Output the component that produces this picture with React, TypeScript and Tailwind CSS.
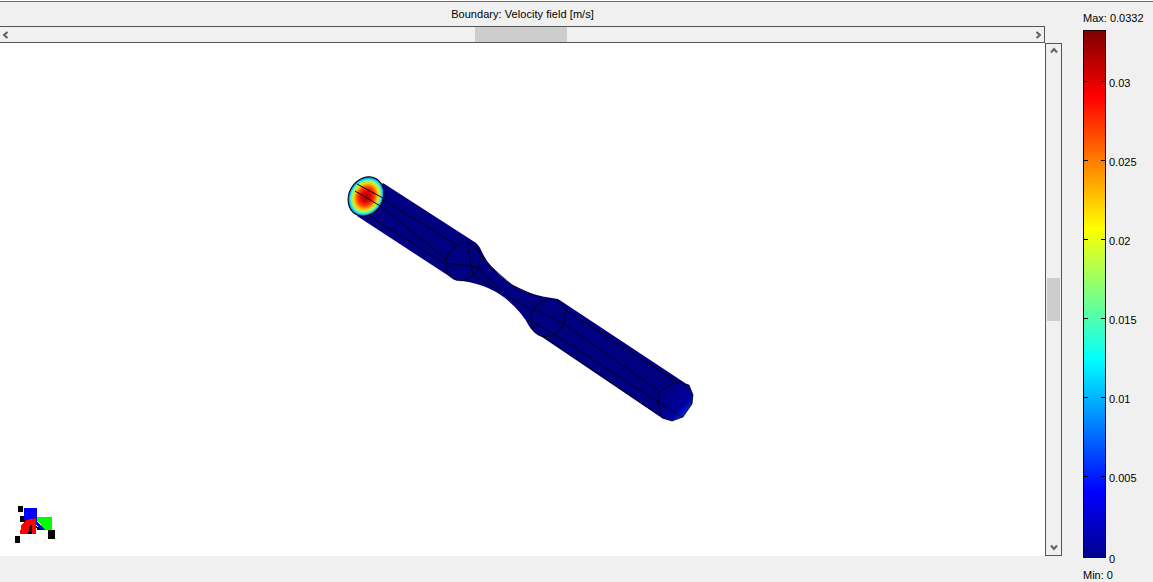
import React from 'react';

const TICKS = ['0.03', '0.025', '0.02', '0.015', '0.01', '0.005'];

const Chevron: React.FC<{ d: string }> = ({ d }) => (
  <svg width="8" height="8" viewBox="0 0 8 8" fill="none" stroke="#606060" strokeWidth="2">
    <path d={d} />
  </svg>
);

// Model drawn in page coordinates, viewBox starts at the canvas top
const Model: React.FC = () => (
  <svg className="block" width="1045" height="513" viewBox="0 43 1045 513">
    <defs>
      <radialGradient id="inlet" cx="0.5" cy="0.5" r="0.5">
        <stop offset="0" stopColor="#a00000" />
        <stop offset="0.25" stopColor="#e00000" />
        <stop offset="0.48" stopColor="#ff4000" />
        <stop offset="0.66" stopColor="#ffc800" />
        <stop offset="0.78" stopColor="#a0ff60" />
        <stop offset="0.88" stopColor="#30e0e0" />
        <stop offset="0.95" stopColor="#0090ff" />
        <stop offset="1" stopColor="#0040d0" />
      </radialGradient>
      <linearGradient id="outlet" x1="0.35" y1="0.35" x2="0.85" y2="0.9">
        <stop offset="0" stopColor="#000088" />
        <stop offset="0.6" stopColor="#0000a0" />
        <stop offset="0.88" stopColor="#0030e0" />
        <stop offset="1" stopColor="#0090ff" />
      </linearGradient>
    </defs>

    <path
      fill="#000080"
      d="M383 183 L473 241 Q479 244 482 252 Q488 266 507 281 Q525 295 558 299 L688 385 L662 418 L542 337 Q533 333 529 326 Q522 312 505 298 Q486 283 455 280 L357 216 Z"
    />
    <path
      fill="url(#outlet)"
      d="M660 392 L675 382 L689 385 L693 395 L692 404 L683 417 L672 421 L662 418 L658 402 Z"
    />

    <g fill="none" stroke="#000000" strokeWidth="1" opacity="0.75">
      <path d="M380 198 L457 245 M382 207 L447 260 M365 213 L450 267" />
      <ellipse cx="463" cy="262" rx="16.5" ry="19.5" transform="rotate(30 463 262)" />
      <path d="M467 242 L473 275 M447 263 L477 267" />
      <path d="M477 267 L507 296 L530 309 M473 275 L500 291 M478 250 L488 264 L512 285 L540 298" />
      <ellipse cx="548" cy="318" rx="16.5" ry="19.5" transform="rotate(30 548 318)" />
      <path d="M533 308 L563 323 M532 322 L552 333" />
      <path d="M566 310 L677 382 M563 323 L660 392 M552 333 L658 402 M545 337 L660 416" />
      <path d="M660 392 L675 382 L689 385 L693 395 L692 404 L683 417 L672 421 L662 418 L658 402 Z M658 402 L682 417" />
    </g>

    <ellipse cx="366" cy="196.5" rx="20.5" ry="17" transform="rotate(-60 366 196.5)" fill="url(#inlet)" stroke="#000000" strokeWidth="1" />
    <path d="M357 184 L383 198 M355 191 L382 207" stroke="#000000" strokeWidth="1" fill="none" />

    {/* axes glyph */}
    <g shapeRendering="crispEdges">
      <rect x="18" y="506" width="5" height="6" fill="#000000" />
      <rect x="15" y="536" width="5" height="7" fill="#000000" />
      <rect x="48" y="530" width="7" height="9" fill="#000000" />
      <rect x="20" y="516" width="7" height="6" fill="#000000" />
      <path d="M24 508 L37 508 L37 521 L45 530 L40 530 L34 521 L24 520 Z" fill="#0000ff" />
      <path d="M37 517 L52 517 L52 530 L45 530 L37 520 Z" fill="#00ff00" />
      <path d="M20 534 L21 526 L26 520 L36 518 L36 534 Z" fill="#ff0000" />
      <path d="M28 534 L30 525 L32 525 L32 534 Z M36 526 L43 530 L37 530 Z" fill="#000000" />
    </g>
  </svg>
);

export default function App() {
  return (
    <div className="w-[1153px] h-[582px] overflow-hidden bg-[#f0f0f0] text-black text-[11px] font-['Liberation_Sans',sans-serif]">
      <div className="h-px bg-white" />
      <div className="h-px bg-[#6d6d6d]" />
      <div className="flex">
        {/* Plot area */}
        <div className="w-[1062px]">
          <div className="w-[1045px] h-6 flex items-center justify-center tracking-[0.05px]">Boundary: Velocity field [m/s]</div>
          <div className="w-[1045px] h-[17px] flex items-center border-y border-r border-[#555555]">
            <div className="ml-[2px] w-[8px] flex">
              <Chevron d="M5.5 1 L2 4 L5.5 7" />
            </div>
            <div className="ml-[465px] w-[92px] h-[15px] bg-[#cdcdcd]" />
            <div className="ml-[467px] w-[8px] flex">
              <Chevron d="M2.5 1 L6 4 L2.5 7" />
            </div>
          </div>
          <div className="flex">
            <div className="w-[1045px] h-[513px] bg-white">
              <Model />
            </div>
            <div className="w-[17px] h-[513px] flex flex-col items-center border border-[#555555]">
              <div className="mt-[3px] h-[8px] flex">
                <Chevron d="M1 5.5 L4 2 L7 5.5" />
              </div>
              <div className="mt-[223px] w-[13px] h-[43px] bg-[#cdcdcd]" />
              <div className="mt-[222px] h-[8px] flex">
                <Chevron d="M1 2.5 L4 6 L7 2.5" />
              </div>
            </div>
          </div>
        </div>

        {/* Colour legend */}
        <div className="ml-[21px] flex-1">
          <div className="h-6 pt-[9px] leading-[14px]">Max: 0.0332</div>
          <div className="mt-1 flex h-[528px]">
            <div className="w-[23px] h-[528px] border border-[#200000] flex flex-col bg-[linear-gradient(to_top,#00008f_0%,#0000ff_12.5%,#00ffff_37.5%,#ffff00_62.5%,#ff0000_87.5%,#800000_100%)]">
              <div className="h-[50px] shrink-0" />
              {TICKS.map((t) => (
                <div key={t} className="h-[79px] shrink-0 flex justify-between">
                  <div className="w-1 h-px bg-black" />
                  <div className="w-1 h-px bg-black" />
                </div>
              ))}
            </div>
            <div className="ml-[3px] h-[528px] flex flex-col">
              <div className="h-[46px] shrink-0" />
              {TICKS.map((t) => (
                <div key={t} className="h-[79px] shrink-0 leading-[14px]">
                  {t}
                </div>
              ))}
              <div className="mt-[2px] leading-[14px] shrink-0">0</div>
            </div>
          </div>
          <div className="mt-[10px] leading-[14px]">Min: 0</div>
        </div>
      </div>
    </div>
  );
}
